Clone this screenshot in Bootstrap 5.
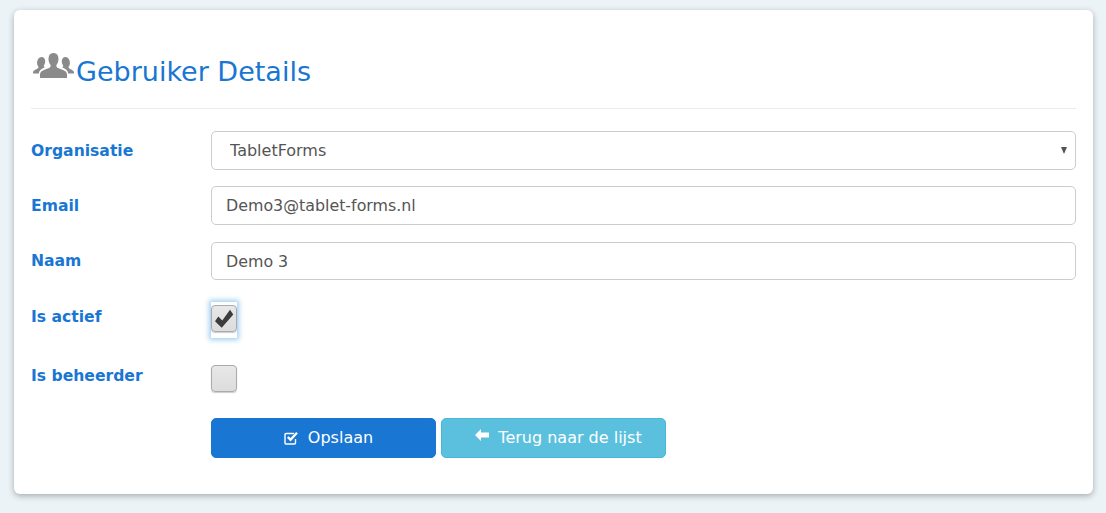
<!DOCTYPE html>
<html lang="nl">
<head>
  <meta charset="utf-8">
  <title>Gebruiker Details</title>
  <link href="https://cdn.jsdelivr.net/npm/bootstrap@5.3.0/dist/css/bootstrap.min.css" rel="stylesheet">
  <style>
    html, body { height: 100%; }
    body { background: #ecf3f7; font-family: "DejaVu Sans", Verdana, sans-serif; overflow: hidden; }
    .page-wrap { padding: 10px 13px 0 14px; }
    .detail-card { background: #fff; border-radius: 6px; box-shadow: 0 2px 6px rgba(0,0,0,.3); padding: 41px 17px 36px; }
    .detail-title { color: #1976d2; font-size: 27px; font-weight: 400; line-height: 42px; margin: 0; }
    .title-icon { width: 41px; height: 25px; margin: 0 2px; vertical-align: 3px; }
    .title-rule { border-top: 1px solid #e9ecef; margin-top: 15px; margin-bottom: 22px; }
    .form-line { margin-bottom: 16px; }
    .line-gap-17 { margin-bottom: 17px; }
    .line-gap-25 { margin-bottom: 25px; }
    .line-gap-33 { margin-bottom: 33px; }
    .line-gap-26 { margin-bottom: 26px; }
    .line-label { width: 180px; flex: none; color: #1976d2; font-weight: 700; font-size: 15.6px; line-height: 20px; margin: 0; padding-top: 10px; }
    .short-label { padding-top: 9px; }
    .check-label { padding-top: 2px; }
    .check-label-b { padding-top: 1px; }
    .line-field { flex: 1; min-width: 0; }
    .line-field .form-control, .line-field .form-select { height: 39px; border-color: #ccc; color: #555; font-size: 15.85px; border-radius: 5px; padding: 0 14px; }
    .line-field .form-control.field-short { height: 38px; }
    .line-field .form-select { padding-left: 18px; background-image: none; font-size: 16px; }
    .select-wrap { position: relative; }
    .select-arrow { position: absolute; right: 9px; top: 16px; width: 0; height: 0; border-left: 3.5px solid transparent; border-right: 3.5px solid transparent; border-top: 7px solid #555; }
    .tick-box { width: 26px; height: 27px; border: 1px solid #aaa; border-radius: 4px; background: linear-gradient(#e8e8e8, #dcdcdc); box-shadow: 0 1px 1px rgba(0,0,0,.2); display: flex; align-items: center; justify-content: center; }
    .tick-box svg { width: 22px; height: 22px; flex: none; }
    .tick-glow { width: 26px; height: 36px; margin: -3px 0 -6px; padding-top: 3px; background: #fff; box-shadow: 0 0 5px 2px rgba(102,175,233,.6); }
    .action-row { gap: 5px; }
    .action-btn { width: 225px; height: 40px; font-size: 16px; border-radius: 5px; padding: 0 0 0 10px; display: flex; align-items: center; justify-content: center; gap: 9px; color: #fff; }
    .btn-save { background: #1976d2; border-color: #1976d2; }
    .btn-back { background: #5bc0de; border-color: #46b8da; }
    .arrow-lift { margin-bottom: 6px; }
  </style>
</head>
<body>
<div class="page-wrap">
  <div class="detail-card">
    <h2 class="detail-title">
      <svg class="title-icon" viewBox="0 0 41 25" fill="#8a8a8a">
        <path d="M20.500 0c3.500 0 5 2.800 5 6 0 2.800-1 4.800-2.200 6.200 0 1.600.6 2.400 3 3.400 3.200 1.300 7.700 2.400 7.700 6V25H7v-3.400c0-3.600 4.500-4.700 7.700-6 2.400-1 3-1.800 3-3.400-1.200-1.400-2.200-3.400-2.200-6.200 0-3.200 1.500-6 5-6z"/>
        <path d="M8.500 4c2.400 0 3.700 1.900 3.700 4.200 0 2-.7 3.300-1.400 4.200 0 .9.300 1.300 1.100 1.800-2.700 1.200-6 3-6 6.300H0v-1.500c.5-1.500 2.500-2.400 3.800-3 1.200-.6 1.700-1.200 1.700-2.300-1-1.100-1.400-2.400-1.400-4 0-2.300 1.500-5.700 4.400-5.700z"/>
        <path transform="matrix(-1 0 0 1 41 0)" d="M8.500 4c2.400 0 3.700 1.900 3.700 4.200 0 2-.7 3.300-1.400 4.200 0 .9.300 1.300 1.100 1.800-2.700 1.200-6 3-6 6.300H0v-1.500c.5-1.500 2.500-2.400 3.800-3 1.200-.6 1.700-1.200 1.700-2.300-1-1.100-1.400-2.400-1.400-4 0-2.300 1.500-5.700 4.400-5.700z"/>
      </svg>Gebruiker Details
    </h2>
    <div class="title-rule"></div>
    <form>
      <div class="d-flex form-line">
        <label class="line-label">Organisatie</label>
        <div class="line-field select-wrap">
          <select class="form-select"><option>TabletForms</option></select>
          <span class="select-arrow"></span>
        </div>
      </div>
      <div class="d-flex form-line line-gap-17">
        <label class="line-label">Email</label>
        <div class="line-field"><input class="form-control" type="text" value="Demo3@tablet-forms.nl"></div>
      </div>
      <div class="d-flex form-line line-gap-25">
        <label class="line-label short-label">Naam</label>
        <div class="line-field"><input class="form-control field-short" type="text" value="Demo 3"></div>
      </div>
      <div class="d-flex form-line line-gap-33">
        <label class="line-label check-label">Is actief</label>
        <div class="line-field">
          <div class="tick-glow">
            <div class="tick-box">
              <svg viewBox="0 0 22 22"><path d="M17 1.800l3.300 4.700L8.700 19.800 2 13.200l3.300-4.700 4 4z" fill="#3c3c3c"/></svg>
            </div>
          </div>
        </div>
      </div>
      <div class="d-flex form-line line-gap-26">
        <label class="line-label check-label-b">Is beheerder</label>
        <div class="line-field"><div class="tick-box"></div></div>
      </div>
      <div class="d-flex mb-0">
        <div class="line-label"></div>
        <div class="d-flex action-row">
          <button type="button" class="btn action-btn btn-save">
            <svg width="15" height="14" viewBox="0 0 15 14" fill="none" stroke="#fff"><path d="M10 2.500H2A1 1 0 0 0 1 3.500V12a1 1 0 0 0 1 1h8.500a1 1 0 0 0 1-1V8" stroke-width="1.400"/><path d="M3.800 6l2.700 2.700L13 1.800" stroke-width="2.400"/></svg>
            Opslaan
          </button>
          <button type="button" class="btn action-btn btn-back">
            <svg class="arrow-lift" width="14" height="12" viewBox="0 0 14 12" fill="#fff"><path d="M0 6l6-6v3.500h8v5H6V12z"/></svg>
            Terug naar de lijst
          </button>
        </div>
      </div>
    </form>
  </div>
</div>
<script src="https://cdn.jsdelivr.net/npm/bootstrap@5.3.0/dist/js/bootstrap.bundle.min.js"></script>
</body>
</html>
